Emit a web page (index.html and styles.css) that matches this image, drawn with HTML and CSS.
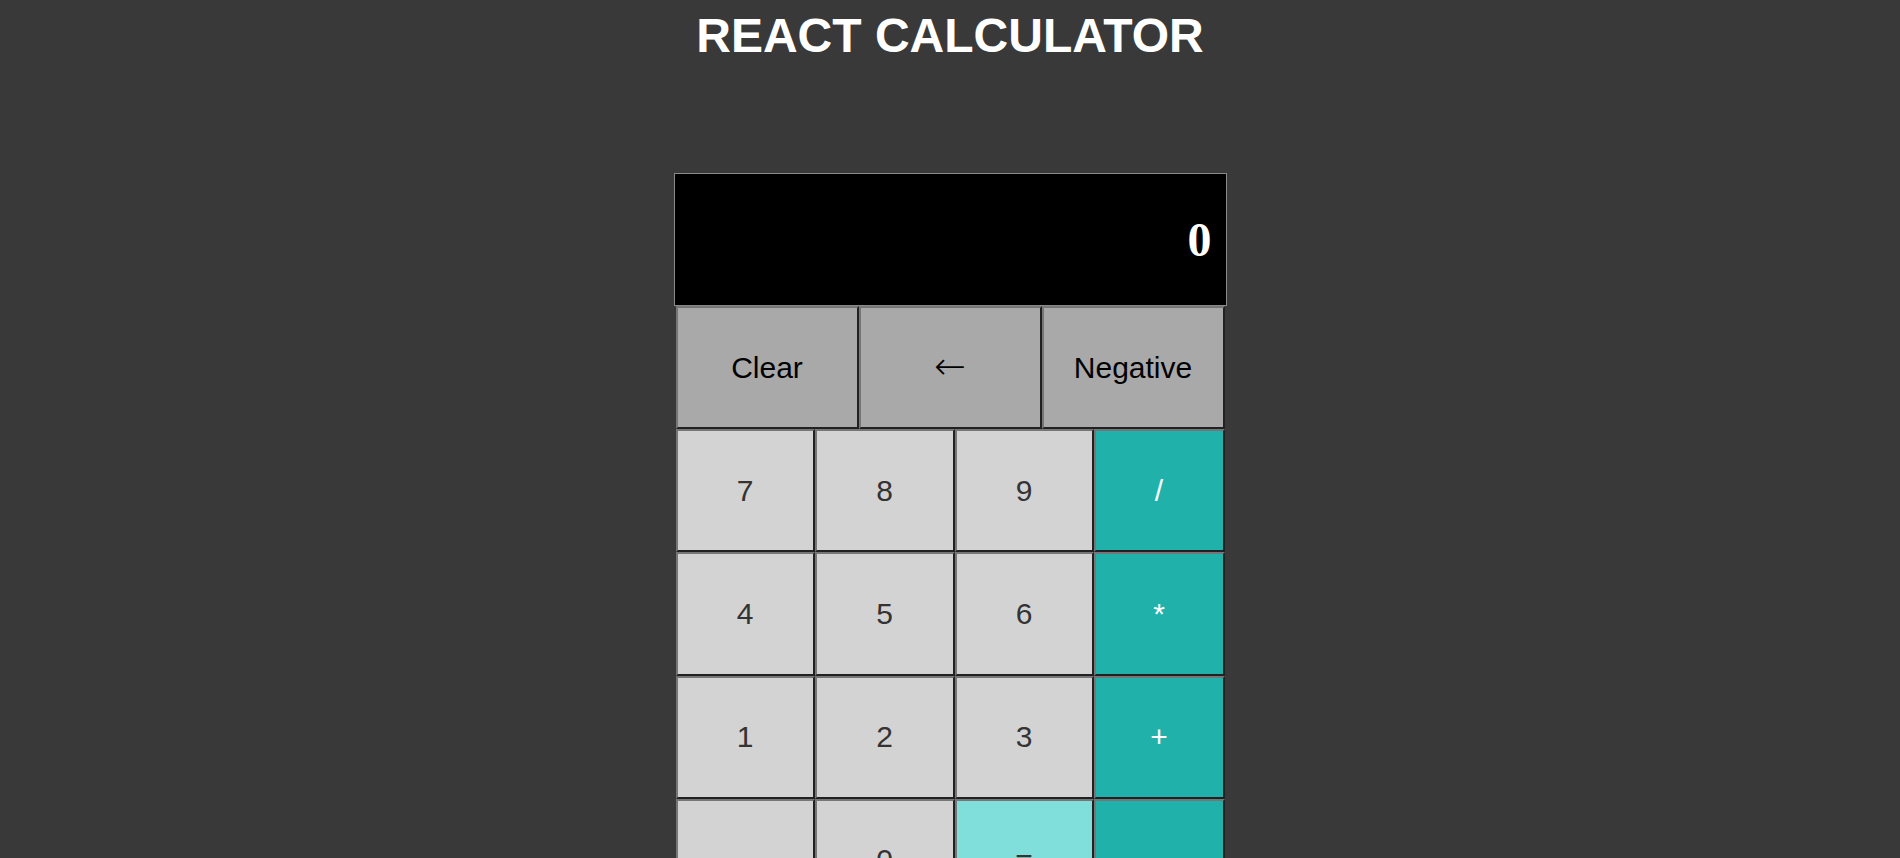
FILE: index.html
```html
<!DOCTYPE html>
<html>
<head>
<meta charset="utf-8">
<title>React Calculator</title>
<link rel="stylesheet" href="styles.css">
</head>
<body>
<h1 class="title">REACT CALCULATOR</h1>
<div class="calc">
  <div class="display">0</div>
  <div class="keys keys-top">
    <button class="key key-fn">Clear</button>
    <button class="key key-fn"><span class="arrow">&larr;</span></button>
    <button class="key key-fn">Negative</button>
  </div>
  <div class="keys keys-grid">
    <button class="key key-num">7</button>
    <button class="key key-num">8</button>
    <button class="key key-num">9</button>
    <button class="key key-op">/</button>
    <button class="key key-num">4</button>
    <button class="key key-num">5</button>
    <button class="key key-num">6</button>
    <button class="key key-op">*</button>
    <button class="key key-num">1</button>
    <button class="key key-num">2</button>
    <button class="key key-num">3</button>
    <button class="key key-op">+</button>
    <button class="key key-num">.</button>
    <button class="key key-num">0</button>
    <button class="key key-eq">=</button>
    <button class="key key-op">-</button>
  </div>
</div>
</body>
</html>
```
FILE: styles.css
```css
html, body {
  margin: 0;
  padding: 0;
}
body {
  background: #393939;
  font-family: "Liberation Sans", Arial, sans-serif;
  overflow: hidden;
  height: 858px;
}
.title {
  margin: 0;
  padding-top: 8px;
  font-size: 48px;
  font-weight: bold;
  color: #ffffff;
  text-align: center;
  line-height: 55px;
}
.calc {
  width: 553px;
  margin: 110px auto 0;
}
.display {
  box-sizing: border-box;
  height: 133px;
  background: #000;
  border: 1px solid #8a8a8a;
  color: #fff;
  font-family: "Liberation Serif", "Times New Roman", serif;
  font-weight: bold;
  font-size: 48px;
  display: flex;
  align-items: center;
  justify-content: flex-end;
  padding-right: 14px;
}
.keys {
  display: grid;
  margin: 0 2px;
}
.keys-top {
  grid-template-columns: repeat(3, 1fr);
}
.keys-grid {
  grid-template-columns: 139px 140px 139px 131px;
}
.key {
  box-sizing: border-box;
  height: 123.2px;
  margin: 0;
  padding: 0;
  border: 2px outset #767676;
  font-family: "Liberation Sans", Arial, sans-serif;
  font-size: 30px;
  color: #333333;
}
.arrow {
  font-family: "DejaVu Sans", sans-serif;
  font-weight: 200;
  font-size: 38px;
  position: relative;
  top: -2px;
}
.key-fn {
  background: #a9a9a9;
  color: #000;
}
.key-num {
  background: #d3d3d3;
}
.key-op {
  background: #20b2aa;
  color: #ffffff;
}
.key-eq {
  background: #80dfda;
}
```
